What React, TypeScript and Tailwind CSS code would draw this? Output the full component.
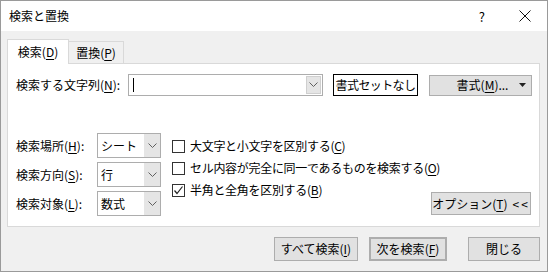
import type { ReactNode } from 'react'

const font = { fontFamily: '"Noto Sans CJK JP", "Noto Sans", sans-serif' }

const Key = ({ k }: { k: string }) => (
  <>
    (<span className="underline underline-offset-2">{k}</span>)
  </>
)

const Chevron = () => (
  <svg width="9" height="6" viewBox="0 0 9 6" className="text-[#606060]">
    <path d="M0.5 0.5 L4.5 4.5 L8.5 0.5" fill="none" stroke="currentColor" strokeWidth="1" />
  </svg>
)

const Select = ({ value }: { value: string }) => (
  <div className="flex h-[25px] w-[64px] border border-[#adadad] bg-white">
    <div className="flex flex-1 items-center pl-[3px] leading-none">{value}</div>
    <div className="flex w-[16px] items-center justify-center bg-[#e5e5e5]">
      <Chevron />
    </div>
  </div>
)

const Check = ({ checked, children }: { checked?: boolean; children: ReactNode }) => (
  <div className="flex h-[22px] items-center gap-[5px] whitespace-nowrap">
    <div className="flex h-[13px] w-[13px] shrink-0 items-center justify-center border border-[#333] bg-white">
      {checked && (
        <svg width="11" height="11" viewBox="0 0 11 11">
          <path d="M1.5 5.5 L4 8.5 L9.5 1.5" fill="none" stroke="#222" strokeWidth="1.2" />
        </svg>
      )}
    </div>
    <span className="leading-none tracking-[-0.3px]">{children}</span>
  </div>
)

const Btn = ({ children, className = '' }: { children: ReactNode; className?: string }) => (
  <div className={`flex items-center justify-center whitespace-nowrap border border-[#adadad] bg-[#e1e1e1] leading-none ${className}`}>
    {children}
  </div>
)

export default function App() {
  return (
    <div style={font} className="flex h-[272px] w-[548px] flex-col border border-[#9a9a9a] bg-[#f0f0f0] text-[12px] text-black">
      <div className="flex h-[30px] items-center justify-between bg-white pl-[8px] pr-[16px]">
        <span className="leading-none">検索と置換</span>
        <div className="flex items-center gap-[34px]">
          <span className="text-[13px] leading-none">?</span>
          <svg width="12" height="12" viewBox="0 0 12 12">
            <path d="M0.5 0.5 L11.5 11.5 M11.5 0.5 L0.5 11.5" stroke="#111" strokeWidth="1" />
          </svg>
        </div>
      </div>

      <div className="flex flex-col px-[6px] pt-[8px]">
        <div className="flex h-[24px] items-end">
          <div className="relative z-10 -mb-px flex h-[25px] w-[62px] items-center justify-center border border-b-0 border-[#d9d9d9] bg-white leading-none">
            検索<Key k="D" />
          </div>
          <div className="flex h-[22px] w-[55px] items-center justify-center border border-b-0 border-l-0 border-[#d9d9d9] leading-none">
            置換<Key k="P" />
          </div>
        </div>

        <div className="flex h-[164px] w-[533px] flex-col border border-[#d9d9d9] bg-white pl-[8px] pt-[10px]">
          <div className="flex h-[22px] items-center">
            <span className="w-[112px] whitespace-nowrap leading-none">
              検索する文字列<Key k="N" />:
            </span>
            <div className="flex h-[22px] w-[195px] border border-[#adadad] bg-white">
              <div className="flex flex-1 items-center pl-[4px]">
                <div className="h-[14px] w-px bg-black" />
              </div>
              <div className="my-[1px] mr-[1px] flex w-[15px] items-center justify-center border border-[#cfcfcf] bg-[#e5e5e5]">
                <Chevron />
              </div>
            </div>
            <div className="ml-[10px] flex h-[22px] w-[85px] items-center justify-center whitespace-nowrap border border-black bg-white leading-none tracking-[-0.6px]">
              書式セットなし
            </div>
            <Btn className="ml-[11px] h-[21px] w-[103px]">
              <span className="flex-1 pl-[16px] text-center">
                書式<Key k="M" />...
              </span>
              <svg width="7" height="4" viewBox="0 0 7 4" className="mr-[5px]">
                <path d="M0 0 L7 0 L3.5 4 Z" fill="#222" />
              </svg>
            </Btn>
          </div>

          <div className="mt-[37px] flex">
            <div className="flex shrink-0 flex-col gap-[4px]">
              {[
                ['検索場所', 'H', 'シート'],
                ['検索方向', 'S', '行'],
                ['検索対象', 'L', '数式'],
              ].map(([label, k, v]) => (
                <div key={k} className="flex items-center">
                  <span className="w-[81px] whitespace-nowrap leading-none">
                    {label}
                    <Key k={k} />:
                  </span>
                  <Select value={v} />
                </div>
              ))}
            </div>
            <div className="ml-[11px] flex w-[240px] shrink-0 flex-col pt-[2px]">
              <Check>
                大文字と小文字を区別する<Key k="C" />
              </Check>
              <Check>
                セル内容が完全に同一であるものを検索する<Key k="O" />
              </Check>
              <Check checked>
                半角と全角を区別する<Key k="B" />
              </Check>
            </div>
            <div className="flex flex-1 items-end justify-end pb-[1px] pr-[8px]">
              <Btn className="h-[23px] w-[100px] shrink-0">
                オプション<Key k="T" />
                <span className="ml-[5px] tracking-[2px]">&lt;&lt;</span>
              </Btn>
            </div>
          </div>
        </div>

        <div className="mt-[10px] flex justify-end gap-[11px] pr-[1px]">
          <Btn className="h-[24px] w-[84px]">
            すべて検索<Key k="I" />
          </Btn>
          <Btn className="h-[24px] w-[78px] border-2 border-[#0078d7]">
            次を検索<Key k="F" />
          </Btn>
          <Btn className="ml-[10px] h-[24px] w-[72px]">閉じる</Btn>
        </div>
      </div>
    </div>
  )
}
